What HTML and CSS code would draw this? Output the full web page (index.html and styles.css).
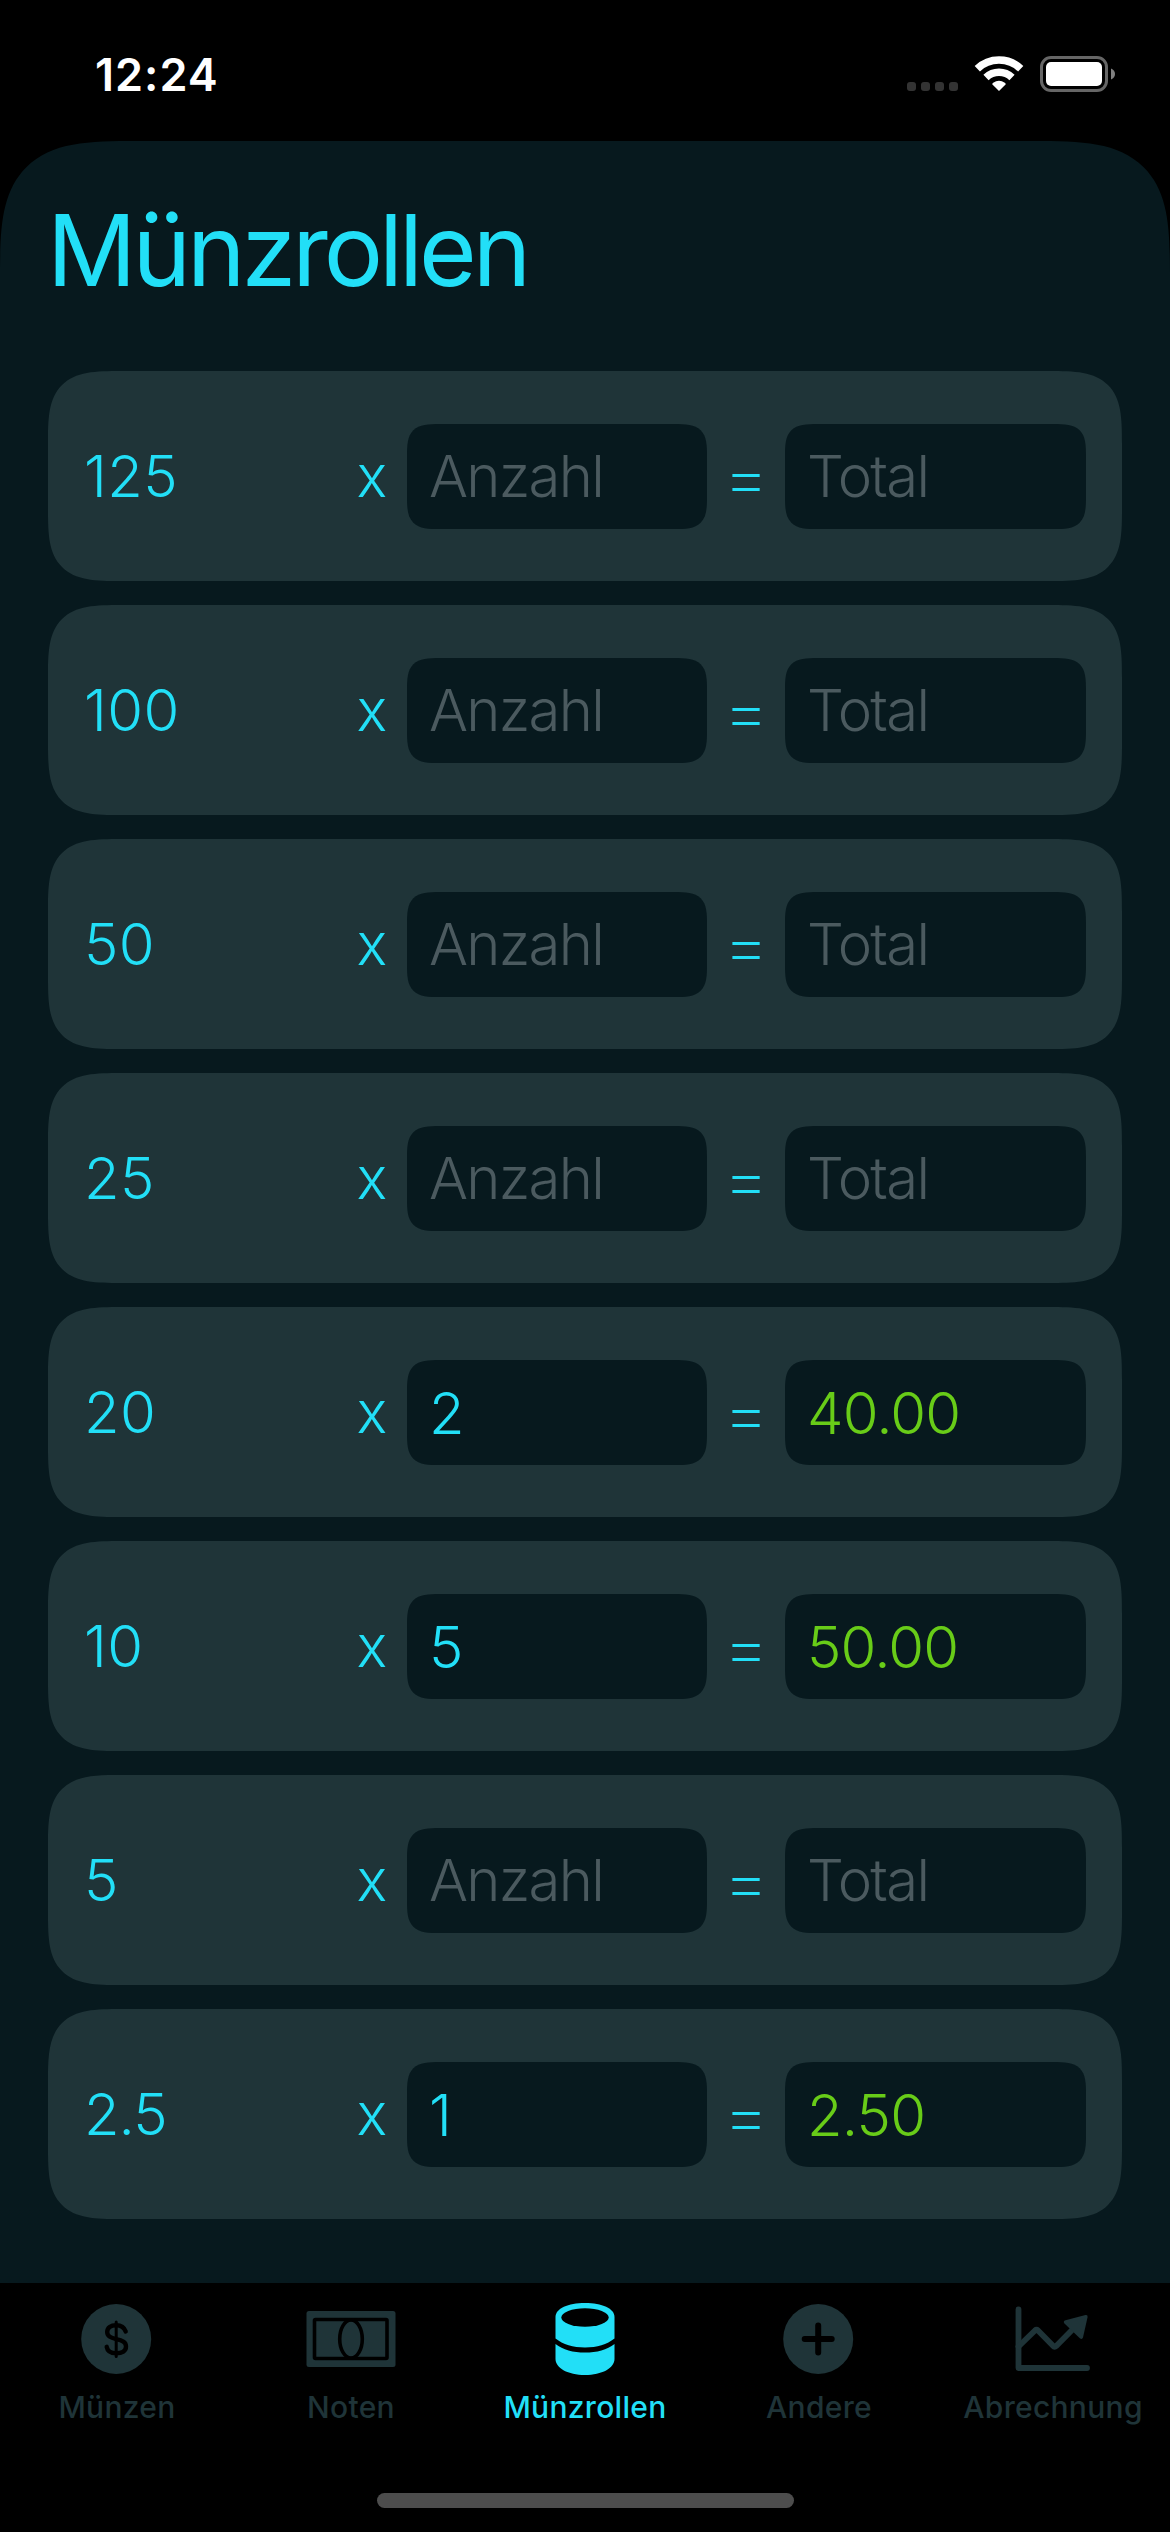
FILE: index.html
```html
<!DOCTYPE html>
<html lang="de">
<head>
<meta charset="utf-8">
<title>Münzrollen</title>
<link rel="stylesheet" href="styles.css">
</head>
<body>
<div class="app">
  <header class="status">
    <span class="time">12:24</span>
    <svg class="status-icons" width="208" height="37" viewBox="907 55 208 37">
      <g fill="#333">
        <rect x="907" y="82" width="9" height="9" rx="3"/><rect x="921" y="82" width="9" height="9" rx="3"/>
        <rect x="935" y="82" width="9" height="9" rx="3"/><rect x="949" y="82" width="9" height="9" rx="3"/>
      </g>
      <g fill="none" stroke="#fff" stroke-width="7.6">
        <path d="M977.300 68.700A31.500 31.500 0 0 1 1020.700 68.700"/>
        <path d="M986 77.400A19 19 0 0 1 1012 77.400"/>
      </g>
      <path d="M999 91l-6.800-6.800q0-.8 1-1.500a10 10 0 0 1 11.600 0q1 .7 1 1.500z" fill="#fff"/>
      <rect x="1041.500" y="57.500" width="65" height="33" rx="9.500" fill="none" stroke="#666" stroke-width="3"/>
      <rect x="1046" y="62" width="56" height="24" rx="5" fill="#fff"/>
      <path d="M1111 68.500q4 1.700 4 5.500t-4 5.500z" fill="#808080"/>
    </svg>
  </header>
  <main class="sheet">
    <h1 class="title">Münzrollen</h1>
    <div class="list">
      <div class="card"><span class="coin">125</span><span class="op">x</span><div class="field empty">Anzahl</div><span class="op equals">=</span><div class="field empty">Total</div></div>
      <div class="card"><span class="coin">100</span><span class="op">x</span><div class="field empty">Anzahl</div><span class="op equals">=</span><div class="field empty">Total</div></div>
      <div class="card"><span class="coin">50</span><span class="op">x</span><div class="field empty">Anzahl</div><span class="op equals">=</span><div class="field empty">Total</div></div>
      <div class="card"><span class="coin">25</span><span class="op">x</span><div class="field empty">Anzahl</div><span class="op equals">=</span><div class="field empty">Total</div></div>
      <div class="card"><span class="coin">20</span><span class="op">x</span><div class="field">2</div><span class="op equals">=</span><div class="field sum">40.00</div></div>
      <div class="card"><span class="coin">10</span><span class="op">x</span><div class="field">5</div><span class="op equals">=</span><div class="field sum">50.00</div></div>
      <div class="card"><span class="coin">5</span><span class="op">x</span><div class="field empty">Anzahl</div><span class="op equals">=</span><div class="field empty">Total</div></div>
      <div class="card"><span class="coin decimal">2.5</span><span class="op">x</span><div class="field">1</div><span class="op equals">=</span><div class="field sum">2.50</div></div>
    </div>
  </main>
  <nav class="tabs">
    <div class="tab">
      <svg class="icon" width="100" height="80" viewBox="-50 -40 100 80">
        <circle cx="-.8" r="35" fill="currentColor"/>
        <g transform="translate(-.8 0)" fill="none" stroke="#000" stroke-width="4.400" stroke-linecap="round">
          <path d="M0-17V17.500" stroke-width="3"/>
          <path d="M9.500-7.500C8-12 4-13.800 0-13.800C-5.500-13.800-9-11-9-7C-9-2.500-5-1.200 0 .2C6 1.600 9.800 3 9.800 7.500C9.800 12 6 14.200 0 14.200C-5 14.200-8.800 12-9.500 7.800"/>
        </g>
      </svg>
      <span class="tab-label">Münzen</span>
    </div>
    <div class="tab">
      <svg class="icon" width="100" height="80" viewBox="-50 -40 100 80">
        <rect x="-44.500" y="-28" width="89" height="56" rx="2.500" fill="currentColor"/>
        <g fill="none" stroke="#000" stroke-width="3.600">
          <rect x="-36.500" y="-19.500" width="72.500" height="39" rx="1"/>
          <ellipse cx="0" cy="0" rx="11.300" ry="19"/>
        </g>
      </svg>
      <span class="tab-label">Noten</span>
    </div>
    <div class="tab active">
      <svg class="icon" width="100" height="80" viewBox="-50 -40 100 80">
        <path d="M-29.500-22C-29.500-30.500-17-36 0-36S29.500-30.500 29.500-22V-.5C22 5.500 12 8.500 0 8.500S-22 5.500-29.500-.5Z" fill="currentColor"/>
        <path d="M-29.500 5C-22 11 -12 13.500 0 13.500S22 11 29.500 5V20C29.500 29 17 36 0 36S-29.500 29-29.500 20Z" fill="currentColor"/>
        <ellipse cx="0" cy="-21.500" rx="23.700" ry="9.300" fill="#000"/>
      </svg>
      <span class="tab-label">Münzrollen</span>
    </div>
    <div class="tab">
      <svg class="icon" width="100" height="80" viewBox="-50 -40 100 80">
        <circle cx="-.8" r="35" fill="currentColor"/>
        <path d="M-.8-13.500V13.500M-14.300 0H12.700" stroke="#000" stroke-width="6" stroke-linecap="round"/>
      </svg>
      <span class="tab-label">Andere</span>
    </div>
    <div class="tab">
      <svg class="icon" width="100" height="80" viewBox="-50 -40 100 80">
        <g fill="none" stroke="currentColor" stroke-width="5.800" stroke-linecap="round" stroke-linejoin="round">
          <path d="M-34.500-29.500V29H34"/>
          <path d="M-34.500 7.500L-18-8.500Q-16.500-9.800-15-8.500L0 6.800Q1.500 8.500 3.500 6.800L22-12"/>
        </g>
        <path d="M12.500-18.800L32.500-24Q35-24.300 34.600-22L30 -1.500Q29 1 26.800-.8L11.500-15.500Q9.700-17.800 12.500-18.800Z" fill="currentColor"/>
      </svg>
      <span class="tab-label">Abrechnung</span>
    </div>
  </nav>
  <div class="home"><div class="home-bar"></div></div>
</div>
</body>
</html>
```

FILE: styles.css
```css
* { box-sizing: border-box; }
body { margin: 0; background: #000; font-family: Inter, "Liberation Sans", sans-serif; }
.app { width: 1170px; height: 2532px; display: flex; flex-direction: column; background: #000; color: #22dff7; overflow: hidden; }

.status { height: 141px; flex: none; display: flex; justify-content: space-between; padding: 55px 55px 0 95px; }
.time { height: 39px; line-height: 39px; font-size: 45px; font-weight: 600; color: #fff; letter-spacing: 1px; }
.status-icons { display: block; }

.sheet { height: 2142px; flex: none; padding: 49px 48px 0; background: #07191e; border-radius: 90px 90px 0 0; }
.title { margin: 0 0 61px -1px; line-height: 120px; font-size: 99px; font-weight: 400; letter-spacing: -4px; }
.list { display: flex; flex-direction: column; gap: 24px; }
.card { height: 210px; display: grid; grid-template-columns: 253px 70px 300px 78px 301px; align-items: center; padding: 0 36px; border-radius: 48px; background: #1f3438; font-size: 58px; font-weight: 300; }
.coin { letter-spacing: 0.4px; }
.decimal { letter-spacing: -1px; }
.op { text-align: center; }
.equals { font-size: 73px; line-height: 105px; font-weight: 200; }
.field { height: 105px; line-height: 107px; padding-left: 22px; border-radius: 22px; background: #07191e; }
.empty { line-height: 105px; color: #4b5a5f; letter-spacing: -1.7px; }
.sum { color: #68cc18; letter-spacing: -0.8px; }

/* continuous corners */
@supports (corner-shape: superellipse(1.7)) {
  .sheet, .card, .field { corner-shape: superellipse(1.7); }
  .sheet { border-radius: 137px 137px 0 0; }
  .card { border-radius: 73px; }
  .field { border-radius: 33px; }
}

.tabs { height: 170px; flex: none; display: grid; grid-template-columns: repeat(5, 234px); padding-top: 16px; color: #1f3438; }
.tab { display: flex; flex-direction: column; align-items: center; }
.active { color: #22dff7; }
.icon { display: block; }
.tab-label { margin-top: 10px; line-height: 36px; font-size: 30px; font-weight: 500; letter-spacing: 0.3px; }
.home { display: flex; justify-content: center; padding-top: 40px; }
.home-bar { width: 417px; height: 15px; border-radius: 8px; background: #4d4d4d; }
```
